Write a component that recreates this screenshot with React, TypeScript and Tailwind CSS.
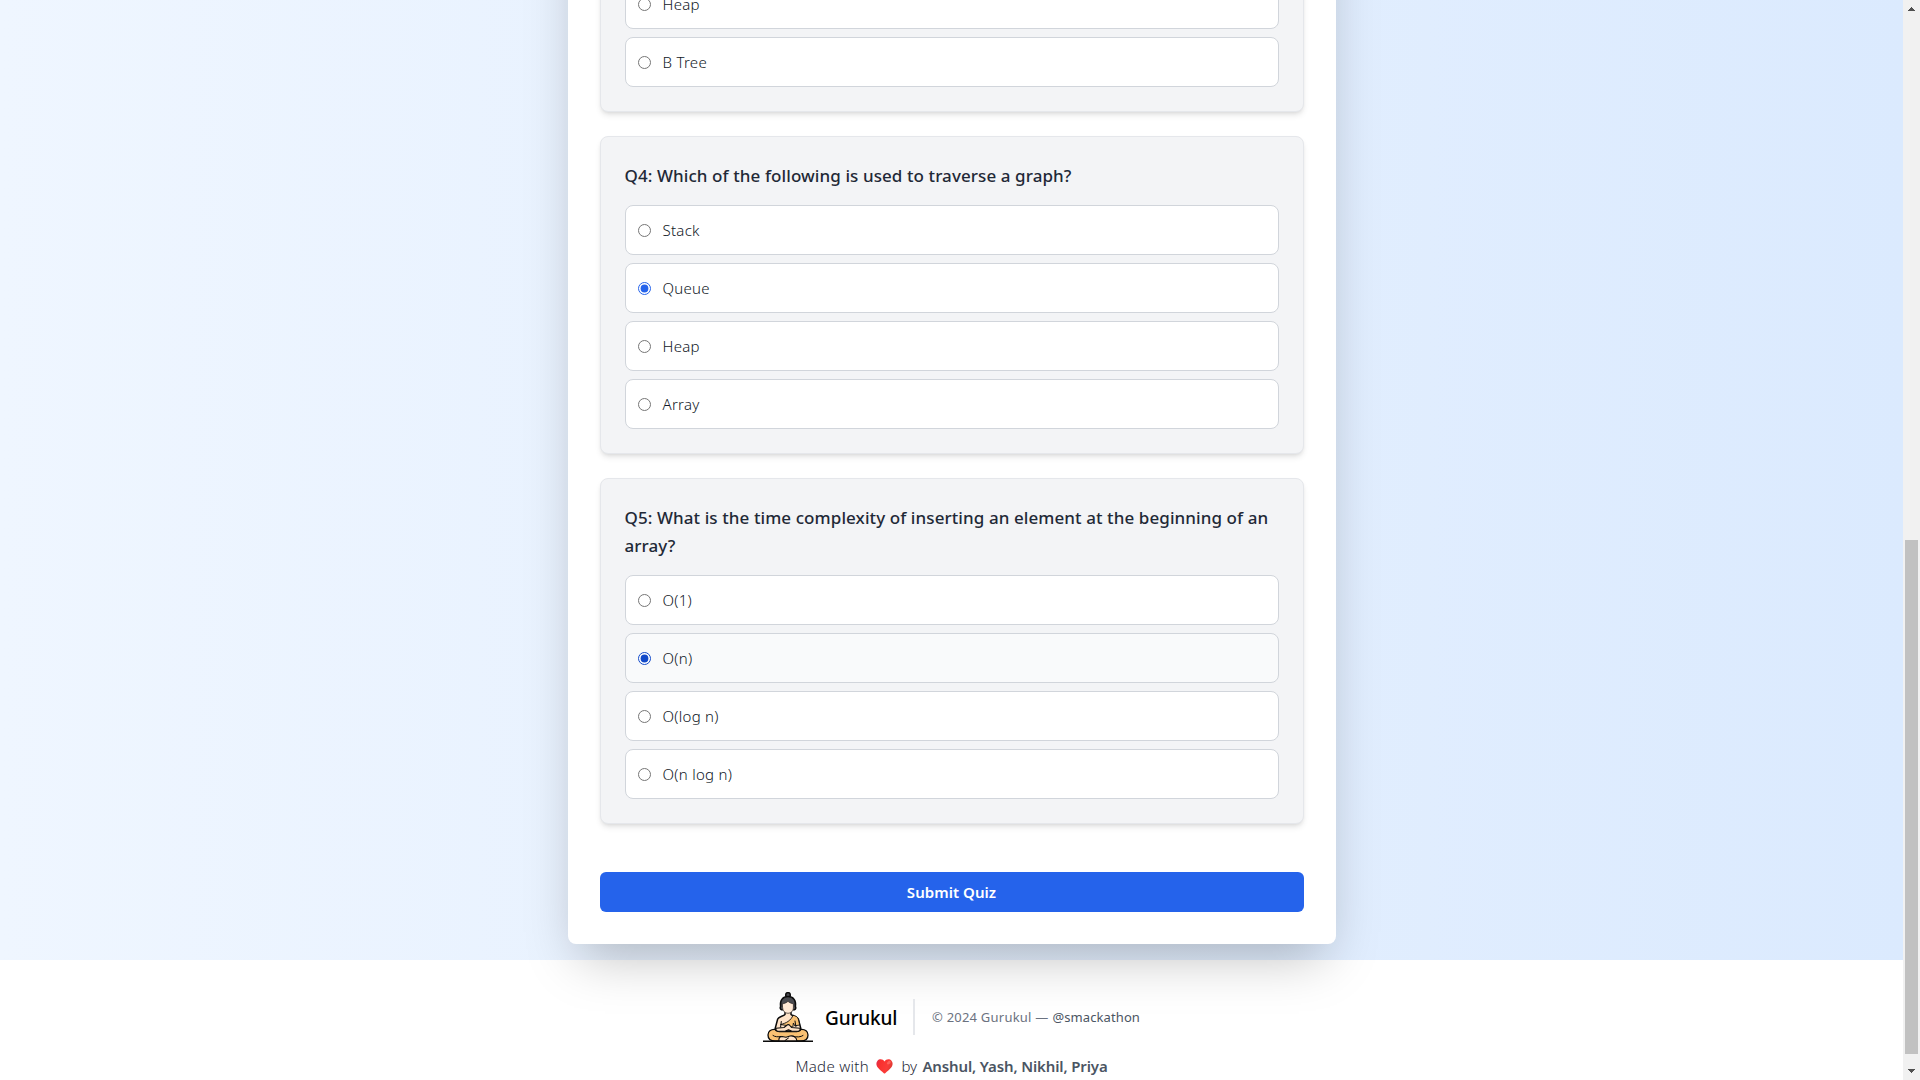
type Option = { label: string; hovered?: boolean };
type Question = { id: string; title: string; options: Option[]; selected?: number };

const questions: Question[] = [
  {
    id: "q3",
    title: "",
    options: [{ label: "Heap" }, { label: "B Tree" }],
  },
  {
    id: "q4",
    title: "Q4: Which of the following is used to traverse a graph?",
    options: [{ label: "Stack" }, { label: "Queue" }, { label: "Heap" }, { label: "Array" }],
    selected: 1,
  },
  {
    id: "q5",
    title:
      "Q5: What is the time complexity of inserting an element at the beginning of an array?",
    options: [
      { label: "O(1)" },
      { label: "O(n)", hovered: true },
      { label: "O(log n)" },
      { label: "O(n log n)" },
    ],
    selected: 1,
  },
];

function MeditationLogo() {
  return (
    <svg
      width="50"
      height="50"
      viewBox="0 0 50 50"
      fill="none"
      stroke="#0b0b0b"
      strokeWidth="1.5"
      strokeLinecap="round"
      strokeLinejoin="round"
      className="shrink-0"
    >
      <circle cx="25" cy="2.9" r="2.3" fill="#4a4b50" />
      <path
        d="M17.6 14.5C16.6 8 20 4.6 25 4.6s8.4 3.4 7.4 9.9c.7 1 .5 3-.9 3.3H18.5c-1.4-.3-1.6-2.3-.9-3.3z"
        fill="#4a4b50"
      />
      <path d="M22 18.5v4c-2 2-6 1.800-7.300 4.500L12.300 36c-.4 2 .7 3 2.700 3h20c2 0 3.100-1 2.700-3l-2.400-9c-1.300-2.700-5.300-2.500-7.300-4.500v-4z" fill="#ffe3c8" />
      <path
        d="M19.600 11.800c1.900-.3 4.200-1.200 5.400-2.500 1.200 1.300 3.500 2.200 5.400 2.500V16c0 3.200-2.600 5.300-5.400 5.300S19.600 19.200 19.600 16z"
        fill="#ffe9d5"
        stroke="#2a2422"
        strokeWidth="0.7"
      />
      <path
        d="M30 23.300c2.600.5 4.500 1.400 5.300 3.700l1.400 6-5 .8-1.300-2.800-.6 4.200-4.300-1.400-8-1.300c5.600-1.200 10.500-3.800 12.500-9.200z"
        fill="#f9c173"
        strokeWidth="0.9"
      />
      <path d="M18.300 29.500l-.7 5.500M32 29l.9 5.500" strokeWidth="1" />
      <path
        d="M12 37.400c-4.200-.3-7 2-7 5.600C5 47 8 49 12 49h26c4 0 7-2 7-6 0-3.600-2.800-5.900-7-5.600-1.300 2.300-4 2.300-7 2.300H19c-3 0-5.700 0-7-2.300z"
        fill="#f9c173"
        strokeWidth="1.300"
      />
      <path
        d="M13 36.300l8-.8 3.500-2.700c1.300-.5 2.300.3 2.800 1.200l1.200 1.500 8.500.8c.6 2-1 3-3 3H29l-3.500-1.500L22 39.300h-6c-2 0-3.500-1-3-3z"
        fill="#ffe3c8"
        strokeWidth="1.100"
      />
      <path
        d="M16 49c-.5-2.500.5-4.300 3-4.500l4 .8 4-1.300c3-.6 6.500.8 7 5z"
        fill="#ffe3c8"
        strokeWidth="1.100"
      />
      <path d="M10 43.500c2 1.500 5 1.500 8 1M40 43.500c-2 1.500-6 2-10 .8M22 48.500l3.500-2.500" strokeWidth="1" />
      <path d="M0 49.200h50" strokeWidth="1.500" strokeLinecap="butt" />
    </svg>
  );
}

function Heart() {
  return (
    <svg width="17" height="15" viewBox="0 0 17 15" className="shrink-0">
      <defs>
        <linearGradient id="heart" x1="0" y1="0" x2="1" y2="0.3">
          <stop offset="0" stopColor="#dd2b50" />
          <stop offset="0.3" stopColor="#f8312f" />
          <stop offset="0.75" stopColor="#fb3b38" />
          <stop offset="1" stopColor="#e03a33" />
        </linearGradient>
      </defs>
      <path
        d="M8.500 2.400C6.900-.3 3.300-.4 1.500 1.700c-1.800 2.200-1.200 5 .3 6.800 1.600 1.900 4 3.900 6 5.700.5.400.9.400 1.400 0 2-1.800 4.400-3.800 6-5.700 1.500-1.800 2.100-4.600.3-6.800C13.700-.4 10.100-.3 8.500 2.400z"
        fill="url(#heart)"
      />
      <ellipse cx="12.800" cy="3.700" rx="2.200" ry="1.400" fill="#ff7d76" opacity="0.6" transform="rotate(-40 12.800 3.700)" />
    </svg>
  );
}

function OptionRow({ name, option, checked }: { name: string; option: Option; checked: boolean }) {
  return (
    <label
      className={`flex h-[50px] items-center rounded-lg border border-[#d1d5db] p-3 ${
        option.hovered ? "bg-[#f9fafb]" : "bg-white"
      }`}
    >
      <input
        type="radio"
        name={name}
        checked={checked}
        readOnly
        className={`mr-3 size-[13px] shrink-0 ${
          option.hovered ? "accent-[#1149c9]" : "accent-[#2563eb]"
        }`}
      />
      <span className="text-[15px] leading-6 font-light tracking-[0.28px] text-[#111827]">
        {option.label}
      </span>
    </label>
  );
}

function QuestionCard({ question }: { question: Question }) {
  return (
    <section className="shrink-0 rounded-lg border border-[#e5e7eb] bg-[#f3f4f6] p-6 shadow-[0_4px_6px_-1px_rgba(0,0,0,0.1),0_2px_4px_-2px_rgba(0,0,0,0.1)]">
      {question.title && (
        <h3 className="mb-[15px] pt-px text-[17px] leading-7 font-medium tracking-[0.085px] text-[#1f2937]">
          {question.title}
        </h3>
      )}
      <div className="flex flex-col gap-2">
        {question.options.map((option, i) => (
          <OptionRow
            key={option.label}
            name={question.id}
            option={option}
            checked={question.selected === i}
          />
        ))}
      </div>
    </section>
  );
}

function Scrollbar() {
  return (
    <div className="flex h-full w-[17px] shrink-0 flex-col items-center bg-[#f1f1f1]">
      <svg width="17" height="17" viewBox="0 0 17 17" shapeRendering="crispEdges" fill="#505050">
        <path d="M8 7h1v1h1v1h1v1h1v1H5v-1h1V9h1V8h1z" />
      </svg>
      <div className="mt-[523px] h-[514px] w-[13px] bg-[#c1c1c1]" />
      <svg
        width="17"
        height="17"
        viewBox="0 0 17 17"
        shapeRendering="crispEdges"
        fill="#505050"
        className="mt-auto"
      >
        <path d="M5 6h7v1h-1v1h-1v1H9v1H8V9H7V8H6V7H5z" />
      </svg>
    </div>
  );
}

export default function App() {
  return (
    <div className="flex h-[1080px] w-[1920px] overflow-hidden bg-white font-['Noto_Sans',sans-serif]">
      <div className="h-full w-[1903px] shrink-0 overflow-hidden">
        <main className="flex h-[960px] flex-col items-center justify-end bg-[linear-gradient(to_right,#eff6ff,#dbeafe)] pb-4">
          <div className="flex h-[1200px] w-[768px] shrink-0 flex-col justify-end rounded-lg bg-white p-8 shadow-[0_25px_50px_-12px_rgba(0,0,0,0.25)]">
            <div className="flex flex-col gap-6">
              {questions.map((question) => (
                <QuestionCard key={question.id} question={question} />
              ))}
            </div>
            <button className="mt-12 h-10 w-full shrink-0 rounded-md bg-[#2563eb] text-[15px] leading-6 font-semibold tracking-[0.05px] text-white">
              Submit Quiz
            </button>
          </div>
        </main>
        <footer className="flex flex-col items-center pt-8">
          <div className="flex h-[50px] items-center">
            <MeditationLogo />
            <span className="ml-3 w-[72px] pt-0.5 text-[19px] leading-7 font-medium tracking-[-0.15px] whitespace-nowrap text-black">
              Gurukul
            </span>
            <div className="ml-4 h-9 w-0.5 bg-[#e5e7eb]" />
            <p className="ml-[17px] flex w-[208px] justify-between text-[13px] leading-5 whitespace-nowrap">
              <span className="tracking-[0.22px] text-[#6b7280]">© 2024 Gurukul —</span>
              <span className="tracking-[0.1px] text-[#4b5563]">@smackathon</span>
            </p>
          </div>
          <div className="mt-3 flex h-6 items-center text-[15px] leading-6 whitespace-nowrap text-[#4b5563]">
            <span className="w-[74px] font-light tracking-[0.3px] text-[#1f2937]">Made with</span>
            <span className="mr-2 ml-[7px] flex">
              <Heart />
            </span>
            <span className="w-[17px] font-light text-[#1f2937]">by</span>
            <span className="ml-1 font-semibold tracking-[-0.13px]">Anshul, Yash, Nikhil, Priya</span>
          </div>
        </footer>
      </div>
      <Scrollbar />
    </div>
  );
}
